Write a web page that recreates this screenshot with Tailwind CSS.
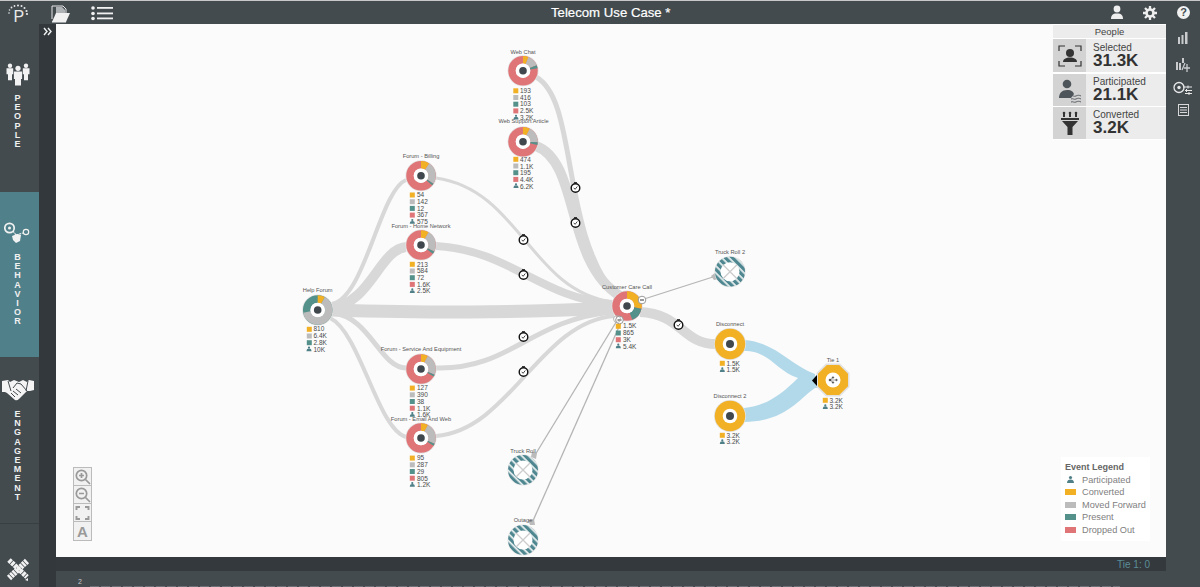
<!DOCTYPE html>
<html>
<head>
<meta charset="utf-8">
<script src="https://cdn.jsdelivr.net/npm/@tailwindcss/browser@4"></script>
</head>
<body class="w-[1200px] h-[587px] overflow-hidden flex flex-col bg-[#434b4f] font-['Liberation_Sans',Arial,sans-serif]">

<header class="h-6 shrink-0 relative flex items-center border-t border-[#c8c8c8] bg-[#434b4f]">
  <div class="w-[39px] h-full flex items-center justify-center">
    <svg width="39" height="24" viewBox="0 0 39 24"><text x="13.5" y="21" font-size="16" fill="#e8e8e8" font-weight="300">P</text>
      <g fill="#e8e8e8"><circle cx="9" cy="12" r=".8"/><circle cx="9.500" cy="9" r=".8"/><circle cx="11.500" cy="6.500" r=".9"/><circle cx="14.500" cy="5" r=".9"/><circle cx="18" cy="4.500" r="1"/><circle cx="21.500" cy="5" r="1"/><circle cx="24.500" cy="7" r="1"/><circle cx="26.500" cy="10" r="1.100"/><circle cx="27" cy="13" r="1.100"/></g></svg>
  </div>
  <svg class="ml-[11px]" width="22" height="20" viewBox="0 0 22 20"><path d="M2 16V3h11l3 3v5" fill="none" stroke="#e8e8e8" stroke-width="1"/><path d="M6 4h6l3 3v3H6z" fill="#aeb2b4"/><path d="M2 19 6 10h14l-4 9z" fill="#f1f1f1"/><path d="M2 19h14" stroke="#f1f1f1"/></svg>
  <svg class="ml-[18px]" width="24" height="16" viewBox="0 0 24 16"><g fill="#f1f1f1"><circle cx="3" cy="3" r="1.800"/><circle cx="3" cy="8.500" r="1.800"/><circle cx="3" cy="13.500" r="1.800"/><rect x="7" y="2" width="16" height="1.800"/><rect x="7" y="7.500" width="16" height="1.800"/><rect x="7" y="12.500" width="16" height="1.800"/></g></svg>
  <div class="absolute left-[551px] top-0 h-full flex items-center text-[13.200px] text-white whitespace-nowrap [-webkit-text-stroke:0.2px_white]">Telecom Use Case *</div>
  <div class="ml-auto flex items-center h-full">
    <svg width="14" height="15" viewBox="0 0 14 15"><circle cx="7" cy="4" r="3.400" fill="#eee"/><path d="M1 14c0-4 2-5 4-5.500h4c2 .5 4 1.500 4 5.500z" fill="#eee"/></svg>
    <svg class="ml-[19px]" width="14" height="14" viewBox="0 0 14 14"><g stroke="#eee" stroke-width="2.300"><path d="M7 0v14M0 7h14M2 2l10 10M12 2 2 12"/></g><circle cx="7" cy="7" r="4.800" fill="#eee"/><circle cx="7" cy="7" r="2.200" fill="#434b4f"/></svg>
    <div class="ml-[20px] mr-[10px] w-[13px] h-[13px] rounded-full bg-[#f2f2f2] flex items-center justify-center text-[11px] leading-none font-bold text-[#434b4f]">?</div>
  </div>
</header>

<main class="flex-1 flex min-h-0">
  <aside class="w-[39px] shrink-0 flex flex-col bg-[#434b4f]">
    <div class="h-[166px] flex flex-col items-center pt-[38px] pr-[4px]">
      <svg width="24" height="24" viewBox="0 0 24 24"><g fill="#f2f2f2"><circle cx="4" cy="3.700" r="2.200"/><circle cx="20" cy="3.700" r="2.200"/><path d="M.5 6.300h6.700v6H6v6H2v-6H.5zM16.800 6.300h6.700v6H22v6h-4v-6h-1.200z"/><circle cx="12" cy="6.300" r="2.600"/><path d="M7.900 9.500h8.200v7.500H15V23.500H9V17H7.900z"/></g></svg>
      <div class="mt-[8px] flex flex-col items-center text-[9px] leading-[9.200px] font-bold text-[#f0f0f0]"><span>P</span><span>E</span><span>O</span><span>P</span><span>L</span><span>E</span></div>
    </div>
    <div class="mt-[2px] h-[165px] flex flex-col items-center pt-[28px] pr-[4px] bg-[#50808a]">
      <svg width="28" height="24" viewBox="0 0 28 24"><circle cx="5.500" cy="8" r="4.700" fill="none" stroke="#f2f2f2" stroke-width="1.700"/><circle cx="5.500" cy="8" r="1.500" fill="#f2f2f2"/><circle cx="22" cy="12" r="2.700" fill="none" stroke="#f2f2f2" stroke-width="1.200"/><path d="M9 11l3 4 7-2" fill="none" stroke="#f2f2f2" stroke-width="1.200" stroke-dasharray="2 .8"/><path d="M8 16l5-2 4 1-1 6-4 2-3-3z" fill="#f2f2f2"/></svg>
      <div class="mt-[9px] flex flex-col items-center text-[9px] leading-[9.200px] font-bold text-[#f0f0f0]"><span>B</span><span>E</span><span>H</span><span>A</span><span>V</span><span>I</span><span>O</span><span>R</span></div>
    </div>
    <div class="h-[167px] flex flex-col items-center pt-[22px] pr-[4px] border-b border-[#383f42]">
      <svg width="32" height="22" viewBox="0 0 32 22"><path d="M0 2 6 1 8 3 12 1 17 3 21 1 25 3 27 1 32 2V11L28 12 25 12 17 20Q15 22 13 21L5 14 3 13 0 13Z" fill="#f4f4f4"/><path d="M6 2 9 12M26 2 24 12M11 9 15 4 19 5 25 12M9 14 13 18M11 12 16 16M14 10 19 14" fill="none" stroke="#434b4f" stroke-width="1"/></svg>
      <div class="mt-[9px] flex flex-col items-center text-[9px] leading-[9.200px] font-bold text-[#f0f0f0]"><span>E</span><span>N</span><span>G</span><span>A</span><span>G</span><span>E</span><span>M</span><span>E</span><span>N</span><span>T</span></div>
    </div>
    <div class="flex-1 flex justify-center pt-[34px] pr-[4px]">
      <svg width="24" height="24" viewBox="0 0 24 24"><g stroke="#f2f2f2" fill="none"><path d="M3 2 21 19" stroke-width="5" stroke-dasharray="3 .8"/><path d="M21 3 3 20" stroke-width="6" stroke-dasharray="2.500 .7"/></g><path d="M19 22l3-2 0 3z" fill="#f2f2f2"/></svg>
    </div>
  </aside>

  <div class="w-[17px] shrink-0 bg-[#32383b] flex justify-center pt-[3px]">
    <svg width="10" height="9" viewBox="0 0 10 9"><path d="M1 1l3 3.500-3 3.500M5 1l3 3.500-3 3.500" fill="none" stroke="#f2f2f2" stroke-width="1.400"/></svg>
  </div>

  <div class="flex-1 flex flex-col min-w-0">
    <div class="relative h-[533px] shrink-0 bg-[#fbfbfb] overflow-hidden">
      <svg class="absolute inset-0 block" width="1110" height="533" viewBox="56 24 1110 533">
        <defs>
          <pattern id="hatch" width="5" height="5" patternUnits="userSpaceOnUse" patternTransform="rotate(-45)"><rect width="5" height="5" fill="#eef3f3"/><rect width="3.300" height="5" fill="#4f8791"/></pattern>
          <g id="clk"><circle r="4.300" fill="#fff" stroke="#111" stroke-width="1.400"/><path d="M-1.800 -.2 -.4 1.300 1.800 -1.500" fill="none" stroke="#333" stroke-width=".9"/><path d="M-1.500 -5.300h3" stroke="#111" stroke-width="1"/></g>
          <g id="pn"><circle cy="-1.700" r="1.100" fill="#4f7f87"/><path d="M-2.500 2c0-2 1-2.700 2.500-2.700S2.500 0 2.500 2z" fill="#4f7f87"/></g>
          <g id="na"><circle r="15.500" fill="#e2e2e2"/><circle r="11" fill="none" stroke="url(#hatch)" stroke-width="8"/><circle r="9.500" fill="#fff"/><path d="M-7-7 7 7M7-7-7 7" stroke="#ccc" stroke-width="1.300"/></g>
          <g id="mn"><circle r="3.800" fill="#fff" stroke="#999" stroke-width="1"/><path d="M-2 0h4" stroke="#333" stroke-width="1"/></g>
        </defs>

        <g fill="none" stroke="#d8d8d8">
          <path d="M332 304C365 298 380 190 406 180" stroke-width="4"/>
          <path d="M332 307C370 304 380 249 406 247" stroke-width="10"/>
          <path d="M332 313C370 316 380 368 406 368" stroke-width="5"/>
          <path d="M330 318C360 332 378 430 406 437" stroke-width="4"/>
          <path d="M330 310C440 313 500 313 614 308" stroke-width="13"/>
          <path d="M436 178C520 190 530 290 612 302" stroke-width="3"/>
          <path d="M436 246C510 250 540 298 612 304" stroke-width="8"/>
          <path d="M436 368C510 370 530 320 612 312" stroke-width="5"/>
          <path d="M436 436C510 430 540 322 614 316" stroke-width="4"/>
          <path d="M536 77C578 100 560 230 616 296" stroke-width="5"/>
          <path d="M536 146C580 162 565 262 620 296" stroke-width="10"/>
          <path d="M640 312C682 314 682 344 716 344" stroke-width="10"/>
        </g>
        <g stroke="#b5b5b5" stroke-width="1.300" fill="#bbb">
          <path d="M641 300 716 276"/><path d="M618 319 535 455"/><path d="M622 320 532 523"/>
          <path d="M711 276l5-4 3 7-5 1z" stroke="none"/><path d="M532 452l5 1-1 6-5-2z" stroke="none"/><path d="M528 520l6-1 1 6-5 0z" stroke="none"/>
        </g>
        <path d="M744 340C775 342 790 365 815 374V380L798 378C775 370 770 351 744 351Z" fill="#b2d9ea"/>
        <path d="M744 408C765 406 780 396 798 378L822 375V388H815C800 398 785 422 744 422Z" fill="#b2d9ea"/>

        <use href="#clk" x="575.500" y="188"/><use href="#clk" x="575.500" y="223"/>
        <use href="#clk" x="523.500" y="240"/><use href="#clk" x="523.500" y="275"/>
        <use href="#clk" x="523.500" y="337"/><use href="#clk" x="523.500" y="372"/>
        <use href="#clk" x="678.500" y="325"/>

        <!-- Web Chat -->
        <g transform="translate(523 70.700)"><circle r="15.500" fill="#e2e2e2"/><g transform="rotate(-90)" fill="none" stroke-width="7.500"><circle r="11" pathLength="100" stroke="#e07578"/><circle r="11" pathLength="100" stroke="#f2b024" stroke-dasharray="6 100"/><circle r="11" pathLength="100" stroke="#bcbcbc" stroke-dasharray="13 100" stroke-dashoffset="-6"/><circle r="11" pathLength="100" stroke="#54918b" stroke-dasharray="3.200 100" stroke-dashoffset="-19"/></g><circle r="7.300" fill="#fff"/><circle r="3.800" fill="#40484d"/></g>
        <!-- Web Support -->
        <g transform="translate(523 141.700)"><circle r="15.500" fill="#e2e2e2"/><g transform="rotate(-90)" fill="none" stroke-width="7.500"><circle r="11" pathLength="100" stroke="#e07578"/><circle r="11" pathLength="100" stroke="#f2b024" stroke-dasharray="7.700 100"/><circle r="11" pathLength="100" stroke="#bcbcbc" stroke-dasharray="17.800 100" stroke-dashoffset="-7.700"/><circle r="11" pathLength="100" stroke="#54918b" stroke-dasharray="3.200 100" stroke-dashoffset="-25.500"/></g><circle r="7.300" fill="#fff"/><circle r="3.800" fill="#40484d"/></g>
        <!-- Billing -->
        <g transform="translate(421 175.700)"><circle r="15.500" fill="#e2e2e2"/><g transform="rotate(-90)" fill="none" stroke-width="7.500"><circle r="11" pathLength="100" stroke="#e07578"/><circle r="11" pathLength="100" stroke="#f2b024" stroke-dasharray="9.400 100"/><circle r="11" pathLength="100" stroke="#bcbcbc" stroke-dasharray="24.700 100" stroke-dashoffset="-9.400"/><circle r="11" pathLength="100" stroke="#54918b" stroke-dasharray="2.100 100" stroke-dashoffset="-34.100"/></g><circle r="7.300" fill="#fff"/><circle r="3.800" fill="#40484d"/></g>
        <!-- Home -->
        <g transform="translate(421 245)"><circle r="15.500" fill="#e2e2e2"/><g transform="rotate(-90)" fill="none" stroke-width="7.500"><circle r="11" pathLength="100" stroke="#e07578"/><circle r="11" pathLength="100" stroke="#f2b024" stroke-dasharray="8.600 100"/><circle r="11" pathLength="100" stroke="#bcbcbc" stroke-dasharray="23.700 100" stroke-dashoffset="-8.600"/><circle r="11" pathLength="100" stroke="#54918b" stroke-dasharray="2.900 100" stroke-dashoffset="-32.300"/></g><circle r="7.300" fill="#fff"/><circle r="3.800" fill="#40484d"/></g>
        <!-- Service -->
        <g transform="translate(421 369)"><circle r="15.500" fill="#e2e2e2"/><g transform="rotate(-90)" fill="none" stroke-width="7.500"><circle r="11" pathLength="100" stroke="#e07578"/><circle r="11" pathLength="100" stroke="#f2b024" stroke-dasharray="7.700 100"/><circle r="11" pathLength="100" stroke="#bcbcbc" stroke-dasharray="23.600 100" stroke-dashoffset="-7.700"/><circle r="11" pathLength="100" stroke="#54918b" stroke-dasharray="2.300 100" stroke-dashoffset="-31.300"/></g><circle r="7.300" fill="#fff"/><circle r="3.800" fill="#40484d"/></g>
        <!-- Email -->
        <g transform="translate(421 438)"><circle r="15.500" fill="#e2e2e2"/><g transform="rotate(-90)" fill="none" stroke-width="7.500"><circle r="11" pathLength="100" stroke="#e07578"/><circle r="11" pathLength="100" stroke="#f2b024" stroke-dasharray="7.800 100"/><circle r="11" pathLength="100" stroke="#bcbcbc" stroke-dasharray="23.600 100" stroke-dashoffset="-7.800"/><circle r="11" pathLength="100" stroke="#54918b" stroke-dasharray="2.400 100" stroke-dashoffset="-31.400"/></g><circle r="7.300" fill="#fff"/><circle r="3.800" fill="#40484d"/></g>
        <!-- Help Forum -->
        <g transform="translate(317.700 310)"><circle r="15.500" fill="#e2e2e2"/><g transform="rotate(-90)" fill="none" stroke-width="7.500"><circle r="11" pathLength="100" stroke="#54918b"/><circle r="11" pathLength="100" stroke="#f2b024" stroke-dasharray="8.100 100"/><circle r="11" pathLength="100" stroke="#bcbcbc" stroke-dasharray="63.900 100" stroke-dashoffset="-8.100"/></g><circle r="7.300" fill="#fff"/><circle r="3.800" fill="#40484d"/></g>
        <!-- Customer Care -->
        <g transform="translate(627 306)"><circle r="15.500" fill="#e2e2e2"/><g transform="rotate(-90)" fill="none" stroke-width="7.500"><circle r="11" pathLength="100" stroke="#e07578"/><circle r="11" pathLength="100" stroke="#f2b024" stroke-dasharray="28 100"/><circle r="11" pathLength="100" stroke="#54918b" stroke-dasharray="16.100 100" stroke-dashoffset="-28"/></g><circle r="7.300" fill="#fff"/><circle r="3.800" fill="#40484d"/></g>
        <use href="#mn" x="642" y="300"/><use href="#mn" x="619.500" y="320"/><circle cx="617" cy="319" r="3.500" fill="none" stroke="#aaa" stroke-width=".8"/>
        <!-- Disconnect -->
        <g transform="translate(730 344)"><circle r="16" fill="#e2e2e2"/><circle r="15.200" fill="#f2b024"/><circle r="7.300" fill="#fff"/><circle r="4" fill="#40484d"/></g>
        <g transform="translate(730 416)"><circle r="16" fill="#e2e2e2"/><circle r="15.200" fill="#f2b024"/><circle r="7.300" fill="#fff"/><circle r="4" fill="#40484d"/></g>
        <!-- Tie -->
        <g transform="translate(833 380)"><path d="M-7-16.500H7L16.500-7V7L7 16.500H-7L-16.500 7V-7Z" fill="#e2e2e2"/><path d="M-6.200-15H6.200L15-6.200V6.200L6.200 15H-6.200L-15 6.200V-6.200Z" fill="#f2b024"/><circle r="7.500" fill="#fff"/><g fill="#444" stroke="#444" stroke-width=".5"><circle cx="-3" r="1"/><circle cy="-2.500" cx="0" r=".8"/><circle cy="2.500" cx="0" r=".8"/><circle cx="3.500" r=".8"/><path d="M-3 0 0-2.500M-3 0 0 2.500M-3 0H3.500"/></g></g>
        <path d="M812 380.500 817 375V386Z" fill="#000"/>
        <use href="#na" x="730" y="271.700"/><use href="#na" x="523" y="470"/><use href="#na" x="523" y="540"/>

        <!-- legends -->
        <g fill="#f2b024"><rect x="513.300" y="88.300" width="5" height="5"/><rect x="513.300" y="156.800" width="5" height="5"/><rect x="409.800" y="192.500" width="5" height="5"/><rect x="409.800" y="261.800" width="5" height="5"/><rect x="409.800" y="385.600" width="5" height="5"/><rect x="409.800" y="455.600" width="5" height="5"/><rect x="306.800" y="326.800" width="5" height="5"/><rect x="615.800" y="323.800" width="5" height="5"/><rect x="719.800" y="360.800" width="5" height="5"/><rect x="719.800" y="432.800" width="5" height="5"/><rect x="822.800" y="397.800" width="5" height="5"/></g>
        <g fill="#bcbcbc"><rect x="513.300" y="95" width="5" height="5"/><rect x="513.300" y="163.500" width="5" height="5"/><rect x="409.800" y="199.200" width="5" height="5"/><rect x="409.800" y="268.500" width="5" height="5"/><rect x="409.800" y="392.300" width="5" height="5"/><rect x="409.800" y="462.300" width="5" height="5"/><rect x="306.800" y="333.500" width="5" height="5"/></g>
        <g fill="#54918b"><rect x="513.300" y="101.700" width="5" height="5"/><rect x="513.300" y="170.200" width="5" height="5"/><rect x="409.800" y="205.900" width="5" height="5"/><rect x="409.800" y="275.200" width="5" height="5"/><rect x="409.800" y="399" width="5" height="5"/><rect x="409.800" y="469" width="5" height="5"/><rect x="306.800" y="340.200" width="5" height="5"/><rect x="615.800" y="330.500" width="5" height="5"/></g>
        <g fill="#e07578"><rect x="513.300" y="108.400" width="5" height="5"/><rect x="513.300" y="176.900" width="5" height="5"/><rect x="409.800" y="212.600" width="5" height="5"/><rect x="409.800" y="281.900" width="5" height="5"/><rect x="409.800" y="405.700" width="5" height="5"/><rect x="409.800" y="475.700" width="5" height="5"/><rect x="615.800" y="337.200" width="5" height="5"/></g>
        <use href="#pn" x="516" y="117.500"/><use href="#pn" x="516" y="186"/><use href="#pn" x="412.300" y="221.700"/><use href="#pn" x="412.300" y="291"/><use href="#pn" x="412.300" y="414.800"/><use href="#pn" x="412.300" y="484.800"/><use href="#pn" x="309" y="349.300"/><use href="#pn" x="618.300" y="346.300"/><use href="#pn" x="722.300" y="370"/><use href="#pn" x="722.300" y="442"/><use href="#pn" x="825.300" y="407"/>

        <g font-size="6.500" fill="#4a4a4a">
          <text x="520" y="93">193</text><text x="520" y="99.700">416</text><text x="520" y="106.400">103</text><text x="520" y="113.100">2.5K</text><text x="520" y="119.800">3.2K</text>
          <text x="520" y="162">474</text><text x="520" y="168.700">1.1K</text><text x="520" y="175.400">195</text><text x="520" y="182.100">4.4K</text><text x="520" y="188.800">6.2K</text>
          <text x="417" y="197.300">54</text><text x="417" y="204">142</text><text x="417" y="210.700">12</text><text x="417" y="217.400">367</text><text x="417" y="224.100">575</text>
          <text x="417" y="266.600">213</text><text x="417" y="273.300">584</text><text x="417" y="280">72</text><text x="417" y="286.700">1.6K</text><text x="417" y="293.400">2.5K</text>
          <text x="417" y="390.400">127</text><text x="417" y="397.100">390</text><text x="417" y="403.800">38</text><text x="417" y="410.500">1.1K</text><text x="417" y="417.200">1.6K</text>
          <text x="417" y="460.400">95</text><text x="417" y="467.100">287</text><text x="417" y="473.800">29</text><text x="417" y="480.500">805</text><text x="417" y="487.200">1.2K</text>
          <text x="313.500" y="331.400">810</text><text x="313.500" y="338.100">6.4K</text><text x="313.500" y="344.800">2.8K</text><text x="313.500" y="351.500">10K</text>
          <text x="623" y="328.400">1.5K</text><text x="623" y="335.100">865</text><text x="623" y="341.800">3K</text><text x="623" y="348.500">5.4K</text>
          <text x="726.500" y="365.500">1.5K</text><text x="726.500" y="372.200">1.5K</text>
          <text x="726.500" y="437.500">3.2K</text><text x="726.500" y="444.200">3.2K</text>
          <text x="829.500" y="402.500">3.2K</text><text x="829.500" y="409.200">3.2K</text>
        </g>
        <g font-size="5.700" fill="#555" text-anchor="middle">
          <text x="523" y="53.500">Web Chat</text><text x="523.500" y="123">Web Support Article</text>
          <text x="421" y="157.700">Forum - Billing</text><text x="421" y="227.500">Forum - Home Network</text>
          <text x="421" y="351">Forum - Service And Equipment</text><text x="421" y="421">Forum - Email And Web</text>
          <text x="317.700" y="292">Help Forum</text><text x="627" y="288.700">Customer Care Call</text>
          <text x="730" y="254">Truck Roll 2</text><text x="730" y="326">Disconnect</text><text x="730" y="398">Disconnect 2</text><text x="833" y="362.300">Tie 1</text>
          <text x="523" y="452.700">Truck Roll</text><text x="523" y="522">Outage</text>
        </g>
      </svg>

      <div class="absolute left-[17px] top-[443px] w-[19px] flex flex-col border border-[#bbb] bg-[#f1f1f1] divide-y divide-[#bbb]">
        <div class="h-[18px]"><svg width="17" height="18" viewBox="0 0 17 18"><circle cx="7.500" cy="7.500" r="5.200" fill="none" stroke="#999" stroke-width="1.700"/><path d="M11.500 11.500 16 16M5 7.500h5M7.500 5v5" stroke="#999" stroke-width="1.700"/></svg></div>
        <div class="h-[18px]"><svg width="17" height="18" viewBox="0 0 17 18"><circle cx="7.500" cy="7.500" r="5.200" fill="none" stroke="#999" stroke-width="1.700"/><path d="M11.500 11.500 16 16M5 7.500h5" stroke="#999" stroke-width="1.700"/></svg></div>
        <div class="h-[18px]"><svg width="17" height="18" viewBox="0 0 17 18"><path d="M2.500 6V3H6M11 3h3.500v3M14.500 12v3H11M6 15H2.500v-3" fill="none" stroke="#999" stroke-width="1.900"/></svg></div>
        <div class="h-[18px] flex items-center justify-center text-[15px] leading-none font-bold text-[#999]">A</div>
      </div>

      <div class="absolute right-0 top-0 w-[113px] h-[116px] bg-white flex flex-col gap-[1px] pt-[1px] text-[#444]">
        <div class="h-[13px] bg-[#ececec] flex items-center justify-center text-[9.500px] leading-none">People</div>
        <div class="h-[33px] flex bg-[#ececec]">
          <div class="w-[33px] bg-[#d3d3d3] flex items-center justify-center"><svg width="24" height="22" viewBox="0 0 24 22"><path d="M1 6V1h6M17 1h6v5M23 16v5h-6M7 21H1v-5" fill="none" stroke="#333" stroke-width="1.200"/><circle cx="12" cy="8" r="4" fill="#333"/><path d="M5 17c0-3 3-4.500 7-4.500s7 1.500 7 4.500z" fill="#333"/></svg></div>
          <div class="pl-[7px] flex flex-col justify-center"><span class="text-[10px] leading-[10px]">Selected</span><span class="text-[17px] leading-[16px] font-bold text-[#333]">31.3K</span></div>
        </div>
        <div class="mt-[1px] h-[32px] flex bg-[#ececec]">
          <div class="w-[33px] bg-[#d3d3d3] flex items-center justify-center"><svg width="24" height="25" viewBox="0 0 24 25"><circle cx="9" cy="6" r="4.300" fill="#4e555a"/><path d="M1 20c0-5 3-8 8-8s6 2 7 4l-3 4z" fill="#4e555a"/><path d="M13 18c2-1 3 1 5 0s3-1 5 0M13 21c2-1 3 1 5 0s3-1 5 0M13 24c2-1 3 1 5 0s3-1 5 0" fill="none" stroke="#4e555a" stroke-width=".9"/></svg></div>
          <div class="pl-[7px] flex flex-col justify-center"><span class="text-[10px] leading-[10px]">Participated</span><span class="text-[17px] leading-[16px] font-bold text-[#333]">21.1K</span></div>
        </div>
        <div class="h-[32px] flex bg-[#ececec]">
          <div class="w-[33px] bg-[#d3d3d3] flex items-center justify-center"><svg width="20" height="24" viewBox="0 0 20 24"><g fill="#333"><circle cx="4" cy="2" r="1.300"/><circle cx="10" cy="2" r="1.300"/><circle cx="16" cy="2" r="1.300"/><rect x="3" y="3" width="2" height="3"/><rect x="9" y="3" width="2" height="3"/><rect x="15" y="3" width="2" height="3"/><rect x="1" y="7" width="18" height="2"/><path d="M2 10h16l-5.500 6v8h-5v-8z"/></g></svg></div>
          <div class="pl-[7px] flex flex-col justify-center"><span class="text-[10px] leading-[10px]">Converted</span><span class="text-[17px] leading-[16px] font-bold text-[#333]">3.2K</span></div>
        </div>
      </div>

      <div class="absolute left-[1005px] top-[433px] w-[89px] h-[84px] bg-white pl-[4px] pt-[4px] text-[9.200px] leading-[12.500px] text-[#808080]">
        <div class="font-bold text-[#666] text-[9px]">Event Legend</div>
        <div class="flex items-center gap-[6px]"><svg class="w-[11px] h-[9px] shrink-0" viewBox="0 0 11 9"><circle cx="5.500" cy="2.500" r="1.600" fill="#4f7f87"/><path d="M2 8c0-2.500 1.500-3.500 3.500-3.500S9 5.500 9 8z" fill="#4f7f87"/></svg>Participated</div>
        <div class="flex items-center gap-[6px]"><span class="w-[11px] h-[6px] shrink-0 bg-[#f2b024]"></span>Converted</div>
        <div class="flex items-center gap-[6px]"><span class="w-[11px] h-[6px] shrink-0 bg-[#bcbcbc]"></span>Moved Forward</div>
        <div class="flex items-center gap-[6px]"><span class="w-[11px] h-[6px] shrink-0 bg-[#54918b]"></span>Present</div>
        <div class="flex items-center gap-[6px]"><span class="w-[11px] h-[6px] shrink-0 bg-[#e07578]"></span>Dropped Out</div>
      </div>
    </div>

    <div class="h-[14px] shrink-0 bg-[#33393c] flex items-center justify-end pr-[16px] text-[10px] text-[#5c8d98]">Tie 1: 0</div>
    <div class="flex-1 relative">
      <span class="absolute left-[22px] top-[7px] text-[7px] leading-none text-[#c8c8c8]">2</span>
      <div class="absolute left-[34px] right-[46px] bottom-0 h-[1px] bg-[repeating-linear-gradient(90deg,#6c7275_0_9px,transparent_9px_11px)]"></div>
    </div>
  </div>

  <aside class="w-[34px] shrink-0 flex flex-col items-center pt-[8px] bg-[#434b4f]">
    <svg width="12" height="12" viewBox="0 0 12 12"><g fill="#c9cbcc"><rect x="1" y="5" width="2" height="7"/><rect x="4.500" y="3" width="2" height="9"/><rect x="8" y="0" width="2.500" height="12"/></g></svg>
    <svg class="mt-[14px]" width="14" height="14" viewBox="0 0 14 14"><g fill="#c9cbcc"><rect x="0" y="4" width="2" height="8"/><rect x="3" y="5" width="2" height="7"/><rect x="6" y="0" width="2" height="5"/></g><path d="M6 12 9 5M11 6v8M8 10h6" stroke="#c9cbcc" stroke-width="1.300" fill="none"/></svg>
    <svg class="mt-[9px]" width="20" height="14" viewBox="0 0 20 14"><circle cx="6" cy="6.500" r="5" fill="none" stroke="#e8e8e8" stroke-width="1.300"/><circle cx="6" cy="6.500" r="1.700" fill="#e8e8e8"/><path d="M10 6h9M12 9.500h7M12 12.500h7M15 4.500v3M13.500 8v3M16 11v3" stroke="#e8e8e8" stroke-width="1" fill="none"/></svg>
    <svg class="mt-[9px]" width="11" height="12" viewBox="0 0 11 12"><rect x=".5" y=".5" width="10" height="11" fill="none" stroke="#d8d8d8"/><path d="M2 3.500h7M2 6h7M2 8.500h7" stroke="#d8d8d8" stroke-width="1"/></svg>
  </aside>
</main>
</body>
</html>
